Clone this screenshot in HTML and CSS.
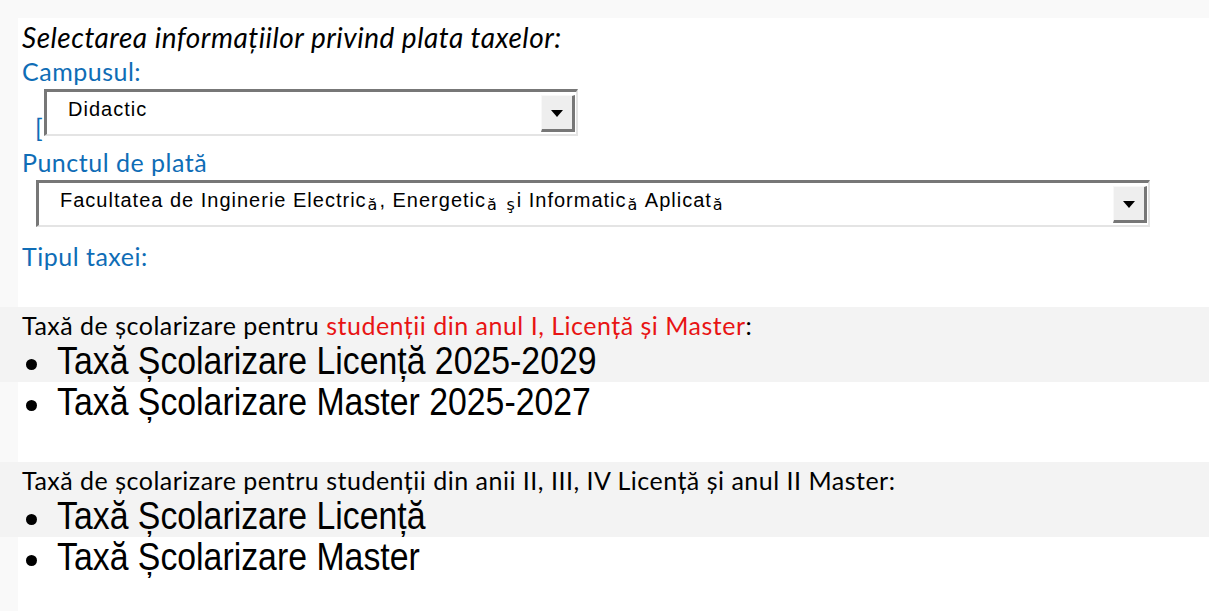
FILE: index.html
```html
<!DOCTYPE html>
<html lang="ro">
<head>
<meta charset="utf-8">
<title>Plata taxelor</title>
<link rel="stylesheet" href="styles.css">
</head>
<body>
<div class="page">
  <div class="content">
    <p class="intro">Selectarea informațiilor privind plata taxelor:</p>
    <div class="label label-campus">Campusul:</div>
    <div class="field field-campus">
      <span class="bracket">[</span>
      <div class="select select-campus">
        <span class="select-text">Didactic</span>
        <span class="select-btn"><span class="arrow"></span></span>
      </div>
    </div>
    <div class="label">Punctul de plată</div>
    <div class="field field-punct">
      <div class="select select-punct">
        <span class="select-text">Facultatea de Inginerie Electric<span class="alt">ă</span>, Energetic<span class="alt">ă</span> <span class="alt">ş</span>i Informatic<span class="alt">ă</span> Aplicat<span class="alt">ă</span></span>
        <span class="select-btn"><span class="arrow"></span></span>
      </div>
    </div>
    <div class="label">Tipul taxei:</div>

    <section class="group group-first">
      <p class="group-title">Taxă de școlarizare pentru <span class="red">studenții din anul I, Licență și Master</span>:</p>
      <ul class="fees">
        <li><span class="fee-text">Taxă Școlarizare Licență 2025-2029</span></li>
        <li><span class="fee-text">Taxă Școlarizare Master 2025-2027</span></li>
      </ul>
    </section>

    <section class="group group-second">
      <p class="group-title">Taxă de școlarizare pentru studenții din anii II, III, IV Licență și anul II Master:</p>
      <ul class="fees">
        <li><span class="fee-text">Taxă Școlarizare Licență</span></li>
        <li><span class="fee-text">Taxă Școlarizare Master</span></li>
      </ul>
    </section>
  </div>
</div>
</body>
</html>
```

FILE: styles.css
```css
html, body {
  margin: 0;
  padding: 0;
}
body {
  background: #f9f9f9;
  font-family: Lato, "Open Sans", "Liberation Sans", sans-serif;
  color: #000;
  width: 1209px;
  height: 611px;
  overflow: hidden;
}
.page {
  padding-top: 18px;
  padding-left: 18px;
  height: 593px;
}
.content {
  background: #ffffff;
  height: 100%;
  padding-left: 4px;
}
p { margin: 0; }

.intro {
  font-style: italic;
  font-size: 28px;
  letter-spacing: 0.5px;
  line-height: 34px;
  padding-top: 2px;
}
.label {
  color: #0f6db6;
  font-size: 25px;
  letter-spacing: 0.5px;
  line-height: 30px;
}
.label-campus {
  margin-top: 2px;
}
.field {
  position: relative;
  box-sizing: border-box;
}
.field-campus {
  height: 61px;
  padding-left: 22px;
  padding-top: 3px;
}
.field-punct {
  height: 64px;
  padding-left: 14px;
  padding-top: 3px;
}
.bracket {
  position: absolute;
  left: 13px;
  top: 26px;
  color: #0f6db6;
  font-size: 25px;
  line-height: 30px;
}
.select {
  position: relative;
  display: flex;
  align-items: center;
  justify-content: space-between;
  height: 47px;
  background: #fff;
  border-style: solid;
  border-width: 3px 2px 2px 3px;
  border-color: #777 #e4e4e4 #e4e4e4 #777;
  box-sizing: border-box;
  font-family: "Liberation Sans", Arial, sans-serif;
  font-size: 20px;
  letter-spacing: 1px;
  line-height: 23px;
}
.select-campus {
  width: 534px;
}
.select-punct {
  width: 1114px;
}
.select-text {
  align-self: flex-start;
  padding-left: 21px;
  padding-top: 6px;
  white-space: nowrap;
}
.alt {
  font-family: "DejaVu Sans", sans-serif;
  font-size: 16px;
  letter-spacing: 0;
  padding: 0 2px 0 1px;
  vertical-align: -3px;
}
.select-btn {
  width: 34px;
  height: 37px;
  margin-right: 1px;
  margin-top: 1px;
  background: #eeeeee;
  border-style: solid;
  border-width: 1px 3px 3px 1px;
  border-color: #f8f8f8 #777 #777 #f8f8f8;
  box-sizing: border-box;
  display: flex;
  align-items: center;
  justify-content: center;
}
.arrow {
  width: 0;
  height: 0;
  border-left: 6px solid transparent;
  border-right: 6px solid transparent;
  border-top: 7px solid #000;
  margin-top: 2px;
}

.group {
  background-image: linear-gradient(#f3f3f3, #f3f3f3);
  background-repeat: no-repeat;
  background-size: 100% 75px;
  background-position: 0 0;
  margin-left: -22px;
  padding-left: 22px;
}
.group-first {
  margin-top: 36px;
}
.group-second {
  margin-top: 39px;
}
.group-title {
  font-size: 25px;
  letter-spacing: 0.5px;
  line-height: 32px;
  padding-top: 2px;
  white-space: nowrap;
}
.red {
  color: #e81414;
}
.fees {
  margin: 0;
  padding: 0;
  list-style: none;
  font-family: "Liberation Sans", Arial, sans-serif;
  font-size: 38px;
  line-height: 41px;
}
.fees li {
  display: flex;
  align-items: flex-start;
}
.fees li::before {
  content: "";
  flex: none;
  width: 11px;
  height: 11px;
  border-radius: 50%;
  background: #000;
  margin: 18px 20px 0 4px;
}
.fee-text {
  display: inline-block;
  white-space: nowrap;
  transform: scaleX(0.89);
  transform-origin: left center;
}
```
